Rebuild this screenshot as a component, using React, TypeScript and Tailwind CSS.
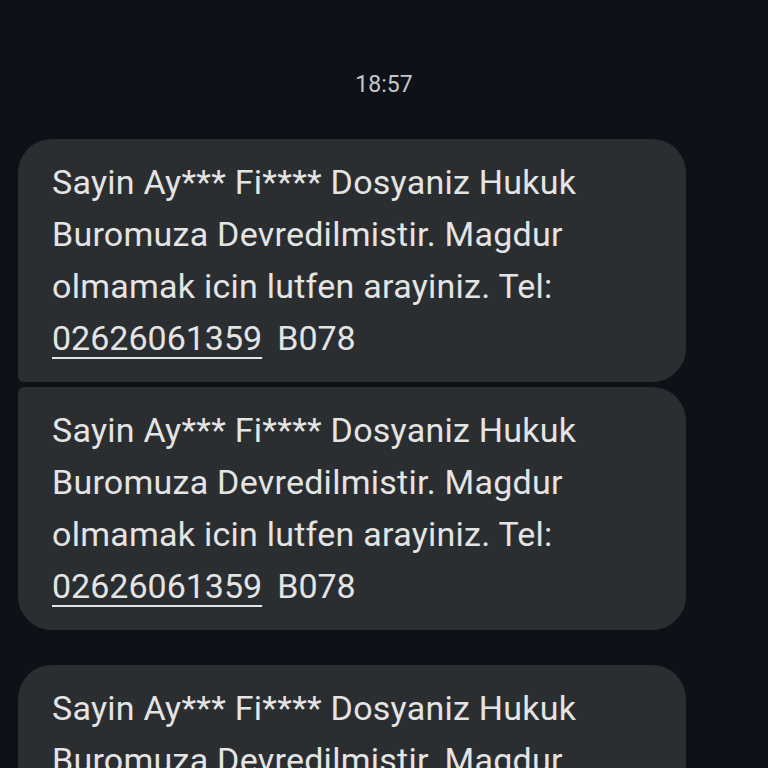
const lines = [
  'Sayin Ay*** Fi**** Dosyaniz Hukuk',
  'Buromuza Devredilmistir. Magdur',
  'olmamak icin lutfen arayiniz. Tel:',
]

function Bubble({ shape }: { shape: string }) {
  return (
    <div className={`w-[668px] bg-[#2b2e31] pl-[34px] pr-6 pt-[17px] pb-[18px] text-[34px] leading-[52px] text-[#e4e4e4] ${shape}`}>
      {lines.map((l) => (
        <div key={l} className="whitespace-nowrap tracking-[0.25px]">{l}</div>
      ))}
      <div className="whitespace-nowrap">
        <span className="underline decoration-2 underline-offset-[7px]">02626061359</span>
        <span className="ml-[15px]">B078</span>
      </div>
    </div>
  )
}

export default function App() {
  return (
    <div
      className="h-[768px] w-[768px] overflow-hidden bg-[#0e1218]"
      style={{ fontFamily: 'Roboto, "Liberation Sans", sans-serif' }}
    >
      {/* Timestamp */}
      <div className="pt-[71px] pb-[40px] text-center text-[23px] leading-[28px] text-[#c4c7c9]">18:57</div>

      <div className="flex flex-col pl-[18px]">
        <Bubble shape="rounded-tl-[34px] rounded-tr-[34px] rounded-br-[34px] rounded-bl-[6px]" />
        <div className="h-[5px]" />
        <Bubble shape="rounded-tl-[6px] rounded-tr-[34px] rounded-br-[34px] rounded-bl-[34px]" />
        <div className="h-[35px]" />
        <Bubble shape="rounded-[34px]" />
      </div>
    </div>
  )
}
